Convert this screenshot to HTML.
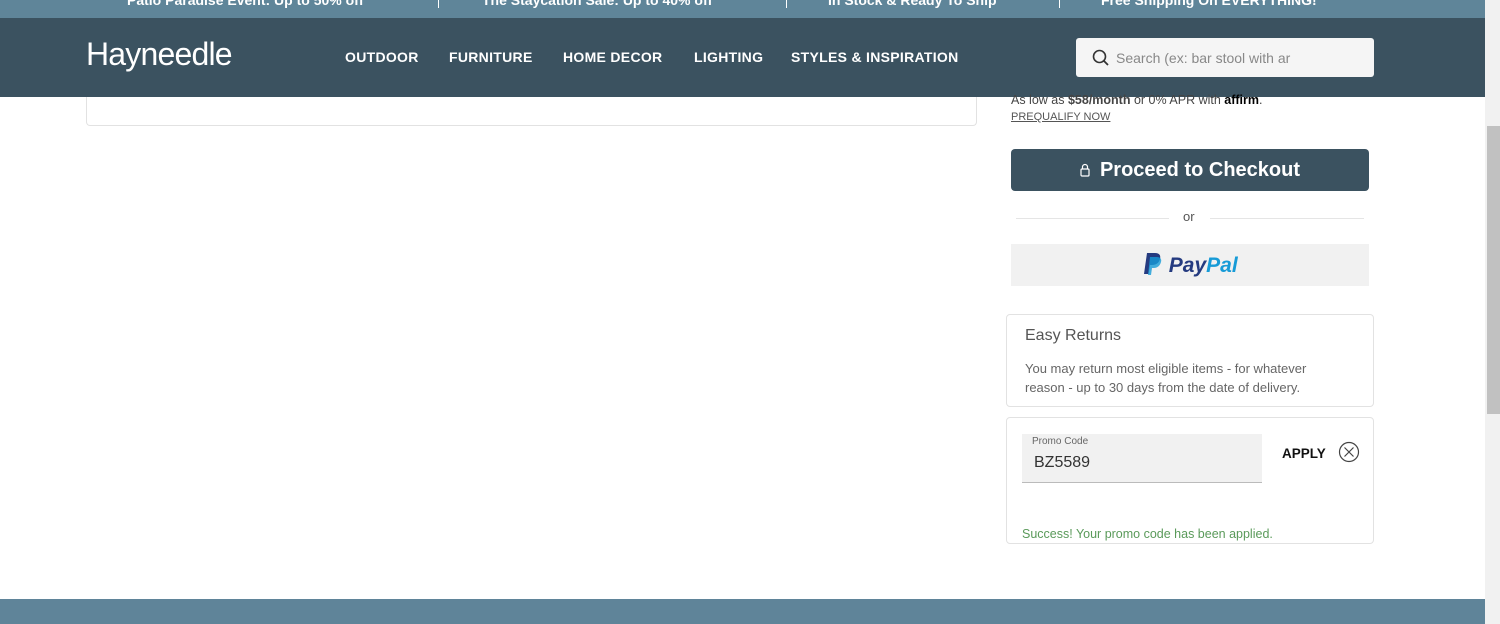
<!DOCTYPE html>
<html><head><style>
*{margin:0;padding:0;box-sizing:border-box}
body{width:1500px;height:624px;overflow:hidden;background:#fff;font-family:"Liberation Sans",sans-serif;position:relative}
.a{position:absolute}
.top{left:0;top:0;width:1485px;height:18px;background:#5f8599;color:#fff;font-weight:bold;font-size:14px}
.top span{position:absolute;top:-8px;white-space:nowrap}
.sep{position:absolute;top:0;width:1px;height:8px;background:#fff}
.nav{left:0;top:18px;width:1485px;height:79px;background:#3b5260}
.nav .m{position:absolute;top:31px;color:#fff;font-weight:bold;font-size:14px;letter-spacing:.3px}
</style></head><body>
<div class="a top">
<span style="left:127px">Patio Paradise Event: Up to 50% off</span>
<div class="sep" style="left:438px"></div>
<span style="left:482px">The Staycation Sale: Up to 40% off</span>
<div class="sep" style="left:786px"></div>
<span style="left:828px">In Stock &amp; Ready To Ship</span>
<div class="sep" style="left:1059px"></div>
<span style="left:1101px">Free Shipping On EVERYTHING!</span>
</div>
<div class="a nav">
<div class="a" style="left:86px;top:18px;color:#fff;font-size:32px;font-weight:normal;letter-spacing:-0.8px">Hayneedle</div>
<div class="m" style="left:345px">OUTDOOR</div>
<div class="m" style="left:449px">FURNITURE</div>
<div class="m" style="left:563px">HOME DECOR</div>
<div class="m" style="left:694px">LIGHTING</div>
<div class="m" style="left:791px">STYLES &amp; INSPIRATION</div>
<div class="a" style="left:1076px;top:20px;width:298px;height:39px;background:#f5f5f5;border-radius:3px">
<svg class="a" style="left:16px;top:11px" width="18" height="18" viewBox="0 0 18 18"><circle cx="7.5" cy="7.5" r="6" fill="none" stroke="#333" stroke-width="1.6"/><line x1="12" y1="12" x2="16" y2="16" stroke="#333" stroke-width="1.8"/></svg>
<div class="a" style="left:40px;top:12px;font-size:14px;color:#888;white-space:nowrap;width:190px;overflow:hidden">Search (ex: bar stool with ar</div>
</div>
</div>
<div class="a" style="left:86px;top:97px;width:891px;height:29px;border:1px solid #e2e2e2;border-top:none;border-radius:0 0 4px 4px"></div>
<div class="a" style="left:1011px;top:93px;font-size:12.5px;color:#444">As low as <b>$58/month</b> or 0% APR with <b style="color:#000">affirm</b>.</div>
<div class="a" style="left:1011px;top:111px;font-size:11px;color:#555;text-decoration:underline">PREQUALIFY NOW</div>
<div class="a" style="left:1011px;top:149px;width:358px;height:42px;background:#3b5260;border-radius:4px;color:#fff;font-weight:bold;font-size:20px;text-align:center;line-height:42px">
<svg style="vertical-align:-1px;margin-right:10px" width="10" height="14" viewBox="0 0 10 14"><rect x="1" y="6" width="8" height="7" rx="1" fill="none" stroke="#fff" stroke-width="1.2"/><path d="M2.5 6V4a2.5 2.5 0 0 1 5 0v2" fill="none" stroke="#fff" stroke-width="1.2"/></svg>Proceed to Checkout</div>
<div class="a" style="left:1016px;top:218px;width:153px;height:1px;background:#e5e5e5"></div>
<div class="a" style="left:1210px;top:218px;width:154px;height:1px;background:#e5e5e5"></div>
<div class="a" style="left:1183px;top:209px;font-size:13px;color:#555">or</div>
<div class="a" style="left:1011px;top:244px;width:358px;height:42px;background:#f1f1f1;text-align:center;line-height:44px">
<svg style="vertical-align:-4px" width="22" height="24" viewBox="0 0 22 24"><path d="M5 1h8c4 0 6 2 5 6-1 4-4 6-8 6H8l-1.5 9H2z" fill="#253b80"/><path d="M8 5h7c3 0 5 2 4 5-1 4-4 6-7 6h-2l-1 7H6z" fill="#179bd7" opacity=".8"/></svg>
<span style="font-weight:bold;font-style:italic;font-size:21px;color:#253b80">Pay</span><span style="font-weight:bold;font-style:italic;font-size:21px;color:#179bd7">Pal</span></div>
<div class="a" style="left:1006px;top:314px;width:368px;height:93px;border:1px solid #e2e2e2;border-radius:4px">
<div class="a" style="left:18px;top:12px;font-size:16px;color:#555">Easy Returns</div>
<div class="a" style="left:18px;top:44px;font-size:13px;color:#666;line-height:19px;width:315px">You may return most eligible items - for whatever reason - up to 30 days from the date of delivery.</div>
</div>
<div class="a" style="left:1006px;top:417px;width:368px;height:127px;border:1px solid #e2e2e2;border-radius:4px">
<div class="a" style="left:15px;top:16px;width:240px;height:49px;background:#f1f1f1;border-bottom:1px solid #bbb">
<div class="a" style="left:10px;top:2px;font-size:10px;color:#666">Promo Code</div>
<div class="a" style="left:12px;top:20px;font-size:16px;color:#333">BZ5589</div></div>
<div class="a" style="left:275px;top:28px;font-size:13.5px;font-weight:bold;color:#111">APPLY</div>
<svg class="a" style="left:331px;top:23px" width="22" height="22" viewBox="0 0 22 22"><circle cx="11" cy="11" r="9.5" fill="none" stroke="#444" stroke-width="1.2"/><path d="M6.5 6.5l9 9M15.5 6.5l-9 9" stroke="#444" stroke-width="1.2"/></svg>
<div class="a" style="left:15px;top:109px;font-size:12.5px;color:#5a9a5a">Success! Your promo code has been applied.</div>
</div>
<div class="a" style="left:0;top:599px;width:1485px;height:25px;background:#5f8499"></div>
<div class="a" style="left:1485px;top:0;width:15px;height:624px;background:#f1f1f1"></div>
<div class="a" style="left:1487px;top:126px;width:13px;height:288px;background:#c1c1c1"></div>
</body></html>
